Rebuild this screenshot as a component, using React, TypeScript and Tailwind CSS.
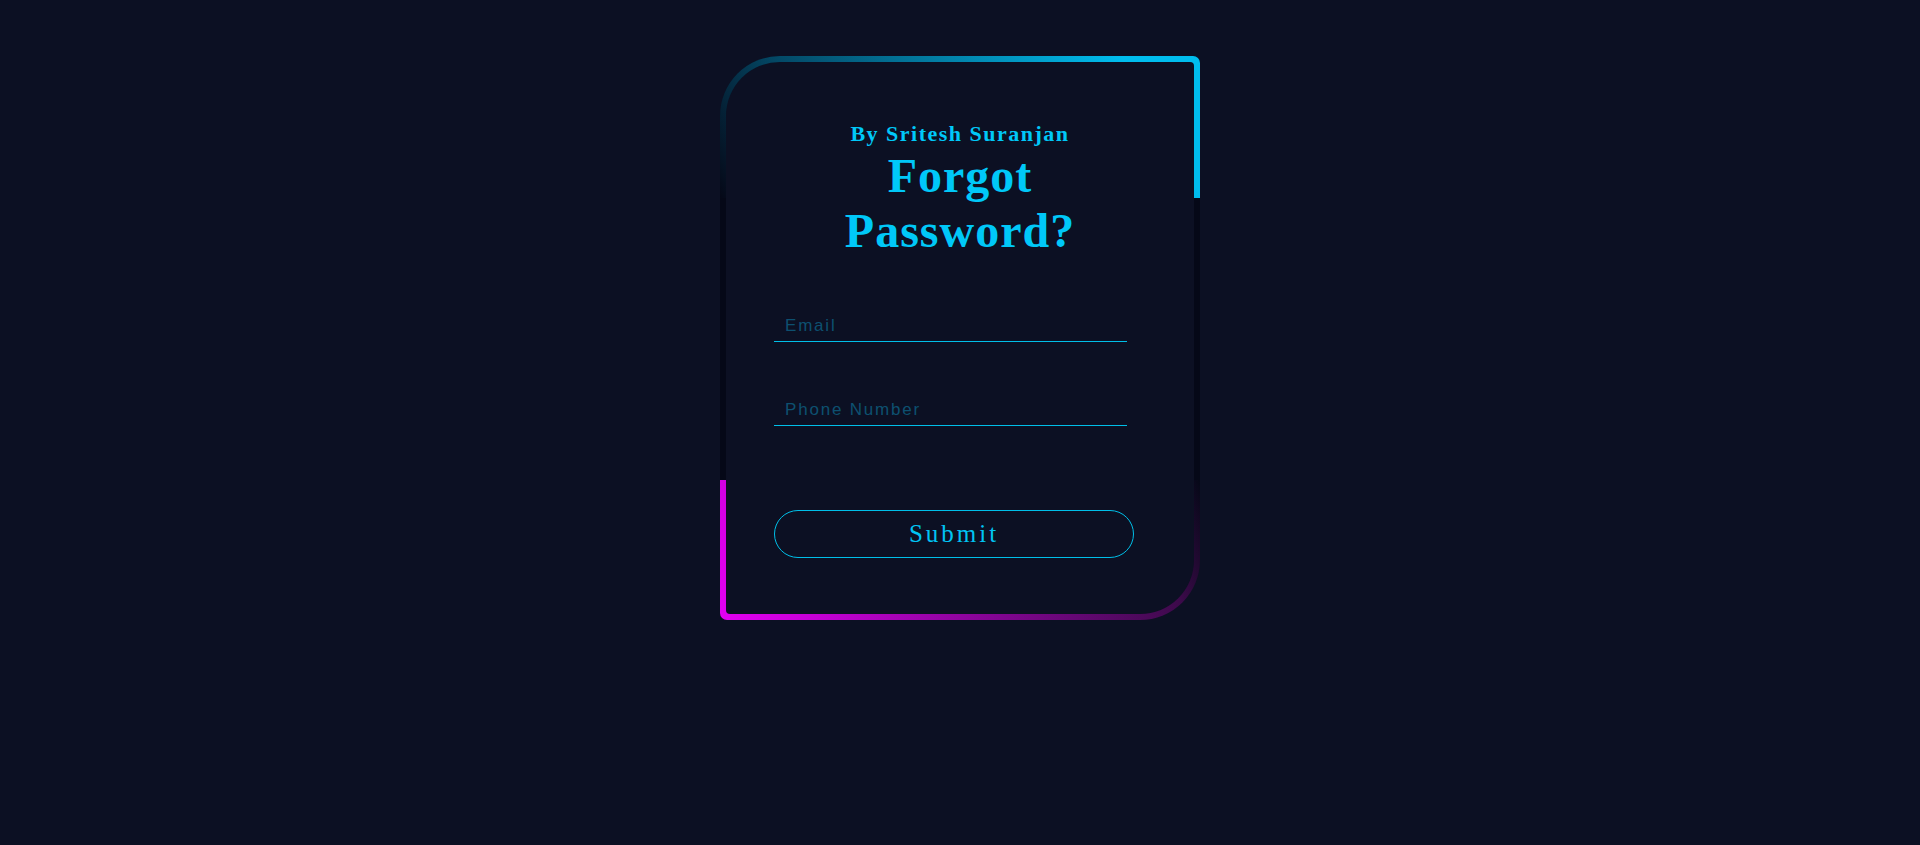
import React from 'react';

const serif = "font-['Liberation_Serif','Times_New_Roman',serif]";
const sans = "font-['Liberation_Sans',Arial,sans-serif]";

const Field: React.FC<{ placeholder: string; type?: string; className?: string }> = ({ placeholder, type = 'text', className = '' }) => (
  <input
    type={type}
    placeholder={placeholder}
    className={`block h-[30px] w-[353px] border-0 border-b border-[#00bfe8] bg-transparent pb-[1px] pl-[11px] text-[17px] tracking-[1.8px] text-[#00c8f8] outline-none placeholder:text-[#0d5070] ${sans} ${className}`}
  />
);

export default function App() {
  return (
    <div className="flex min-h-screen w-full justify-center bg-[#0c1023] pt-[56px]">
      <div
        className="
          h-[564px] w-[480px] p-[6px]
          rounded-tl-[60px] rounded-br-[60px] rounded-tr-[7px] rounded-bl-[7px]
          [background:linear-gradient(60deg,rgba(0,190,240,0)_0%,rgba(0,175,228,0.38)_24%,#00bdee_86%)_top/100%_142px_no-repeat,linear-gradient(70deg,#e400f2_0%,#c600d6_18%,#3c0a4a_88%,rgba(60,10,74,0)_100%)_bottom/100%_140px_no-repeat,#050817]
        "
      >
        <div className="flex h-full flex-col rounded-tl-[54px] rounded-br-[54px] rounded-tr-[4px] rounded-bl-[4px] bg-[#0c1023] px-[48px] pt-[59px]">
          <h2 className={`text-center text-[22px] font-bold leading-[26px] tracking-[1.5px] text-[#00c8f8] ${serif}`}>
            By Sritesh Suranjan
          </h2>
          <h1 className={`mt-[1px] text-center text-[48px] font-bold leading-[55px] tracking-[1px] text-[#00c8f8] ${serif}`}>
            Forgot
            <br />
            Password?
          </h1>

          <form className="mt-[54px] flex flex-col" onSubmit={(e) => e.preventDefault()}>
            <Field placeholder="Email" type="email" />
            <Field placeholder="Phone Number" type="tel" className="mt-[54px]" />
            <button
              type="submit"
              className={`mt-[84px] h-[48px] w-[360px] rounded-full border border-[#00bfe8] bg-transparent text-[25px] tracking-[3px] text-[#00c4f4] ${serif}`}
            >
              Submit
            </button>
          </form>
        </div>
      </div>
    </div>
  );
}
